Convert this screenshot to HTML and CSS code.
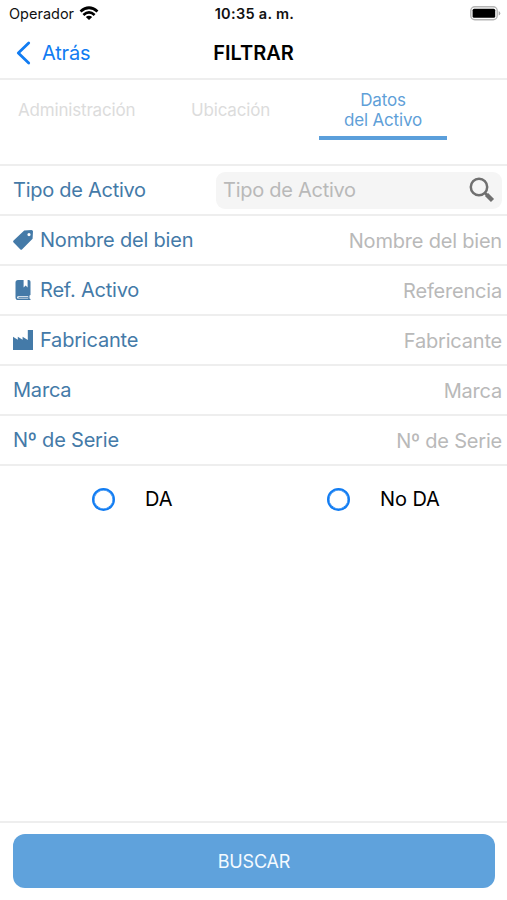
FILE: index.html
```html
<!DOCTYPE html>
<html lang="es">
<head>
<meta charset="utf-8">
<title>Filtrar</title>
<link rel="stylesheet" href="styles.css">
</head>
<body>
<div class="screen">
  <div class="status">
    <div class="carrier"><span>Operador</span>
      <svg class="wifi" width="20" height="15" viewBox="0 0 20 15" fill="none" stroke="#000" stroke-width="2.7"><path d="M1.500 5.500Q10-2 18.500 5.500M4.400 8.900q5.600-4.900 11.200 0"/><path d="M10 14 6.800 11q3.200-2.600 6.400 0z" fill="#000" stroke="none"/></svg>
    </div>
    <span class="clock">10:35 a. m.</span>
    <svg class="battery" width="31" height="15" viewBox="0 0 31 15"><rect x=".8" y=".8" width="26.4" height="13" rx="4" fill="#fff" stroke="#b5b5b5" stroke-width="1.4"/><rect x="2.6" y="2.8" width="22.6" height="9" rx="1.500" fill="#000"/><path d="M28.700 5v4.600q1.600-.7 1.600-2.300T28.700 5z" fill="#aaa"/></svg>
  </div>
  <header class="nav">
    <a class="back"><svg width="15" height="24" viewBox="0 0 15 24" fill="none" stroke="#117cf2" stroke-width="2.8" stroke-linecap="round" stroke-linejoin="round"><path d="M12.700 2 2.300 12l10.400 10"/></svg><span>Atrás</span></a>
    <h1 class="title">FILTRAR</h1>
    <span></span>
  </header>
  <nav class="tabs">
    <a class="tab tab-admin">Administración</a>
    <a class="tab tab-place">Ubicación</a>
    <a class="tab active">Datos<br>del Activo</a>
  </nav>
  <main class="rows">
    <div class="row"><span class="label type">Tipo de Activo</span>
      <div class="search"><span class="type">Tipo de Activo</span>
        <svg width="26" height="26" viewBox="0 0 26 26" fill="none" stroke="#707070"><circle cx="10" cy="10" r="8.200" stroke-width="2.500"/><path d="m15.500 15.500 3 3" stroke-width="2.500"/><path d="m17.500 17.500 6 6" stroke-width="4.400"/></svg>
      </div>
    </div>
    <div class="row"><span class="label"><svg width="20" height="20" viewBox="0 0 20 20" fill="#447aa8"><path fill-rule="evenodd" d="M11.200.5 18.500 0Q20 0 20 1.500l-.4 7.300-10.400 10.400q-1 1-2 0L.6 12.400q-1-1 0-2zM16 3a1.600 1.600 0 1 0 0 3.200A1.600 1.600 0 0 0 16 3z"/></svg>Nombre del bien</span><span class="value">Nombre del bien</span></div>
    <div class="row"><span class="label"><svg width="20" height="20" viewBox="0 0 20 20" fill="#447aa8"><path fill-rule="evenodd" d="M5 0h5.600v7.500l2-2 2 2V0h1.200q1.700 0 1.700 1.700V15l-1 .6v3l1 .4v1H5q-2.500 0-2.500-2.800V2.500Q2.500 0 5 0zm.2 16.200q-1.100 0-1.100 1.200t1.100 1.200h10v-2.400z"/><path d="M5.500 17h9.700v.8H5.500z"/></svg>Ref. Activo</span><span class="value">Referencia</span></div>
    <div class="row"><span class="label"><svg width="20" height="20" viewBox="0 0 20 20" fill="#447aa8"><path d="M0 20V6.700l4.800 3.100V6.700l4.800 3.100V6.700l5.200 3.400V0H20v20z"/></svg>Fabricante</span><span class="value">Fabricante</span></div>
    <div class="row"><span class="label">Marca</span><span class="value">Marca</span></div>
    <div class="row"><span class="label">Nº de Serie</span><span class="value">Nº de Serie</span></div>
  </main>
  <div class="options">
    <label class="option"><i class="radio"></i><span>DA</span></label>
    <label class="option"><i class="radio"></i><span>No DA</span></label>
  </div>
  <footer class="footer"><button class="submit">BUSCAR</button></footer>
</div>
</body>
</html>
```
FILE: styles.css
```css
* { box-sizing: border-box; }
body { margin: 0; background: #fff; font-family: Inter, "Liberation Sans", sans-serif; color: #111; }
svg { display: block; flex: none; }
.screen { width: 507px; height: 900px; display: flex; flex-direction: column; white-space: nowrap; overflow: hidden; }
.status { height: 27px; padding: 0 7px 0 9px; display: grid; grid-template-columns: 1fr auto 1fr; align-items: center; font-size: 14.5px; }
.carrier { display: flex; align-items: center; gap: 5px; }
.clock { font-weight: 600; font-size: 14.5px; letter-spacing: .3px; }
.battery { justify-self: end; margin-right: -1px; }
.nav { height: 53px; padding: 0 16px; display: grid; grid-template-columns: 1fr auto 1fr; align-items: center; border-bottom: 2px solid #eee; }
.back { display: flex; align-items: center; gap: 11px; color: #117cf2; font-size: 20px; letter-spacing: -.2px; }
.title { margin: 0; font-size: 20px; font-weight: 600; color: #000; }
.tabs { height: 84px; padding: 10px 60px 0 18px; display: flex; align-items: flex-start; font-size: 17px; line-height: 20px; letter-spacing: -.18px; color: #dcdcdc; }
.tab-admin { width: 173px; padding-top: 10px; }
.tab-place { width: 128px; padding-top: 10px; }
.active { width: 128px; height: 50px; border-bottom: 4px solid #5b9fdb; color: #5f9fd8; text-align: center; }
.row { height: 50px; padding: 0 5px 0 13px; border-top: 2px solid #eee; display: flex; align-items: center; justify-content: space-between; font-size: 20px; letter-spacing: -.2px; }
.row:last-child { height: 52px; border-bottom: 2px solid #eee; }
.label { display: flex; align-items: center; gap: 7px; color: #447aa8; }
.value { color: #b9b9b9; padding-top: 1px; }
.type { letter-spacing: -.27px; }
.search { width: 286px; height: 37px; border-radius: 9px; background: #f5f5f5; color: #b9b9b9; display: flex; align-items: center; justify-content: space-between; padding: 0 7px 0 7px; }
.options { display: flex; padding: 21px 0 0 92px; font-size: 20px; color: #000; }
.option { display: flex; flex: none; width: 235px; height: 24px; align-items: center; gap: 30px; letter-spacing: -.1px; }
.radio { width: 23px; height: 23px; border: 2.500px solid #117cf2; border-radius: 50%; box-shadow: inset 0 0 0 .5px #117cf2; }
.footer { margin-top: auto; height: 79px; border-top: 2px solid #eee; padding: 11px 12px 0 13px; }
.submit { display: block; width: 100%; height: 54px; border: 0; border-radius: 12px; background: #5fa2dc; color: #f4faff; font: 18px Inter, "Liberation Sans", sans-serif; letter-spacing: -.15px; }
```
